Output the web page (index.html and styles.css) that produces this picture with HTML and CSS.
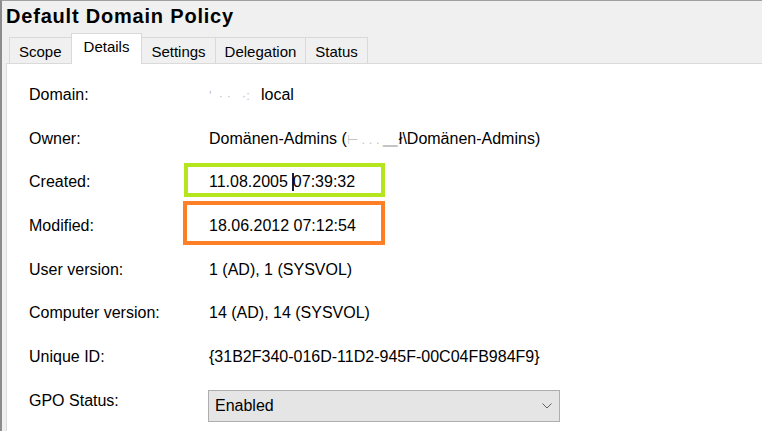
FILE: index.html
```html
<!DOCTYPE html>
<html lang="de">
<head>
  <meta charset="UTF-8" />
  <meta name="viewport" content="width=device-width, initial-scale=1.0" />
  <title>Default Domain Policy</title>
  <link rel="stylesheet" href="styles.css">
</head>
<body>
  <h1 class="title">Default Domain Policy</h1>

  <div class="tabs">
    <span class="tab">Scope</span>
    <span class="tab active">Details</span>
    <span class="tab">Settings</span>
    <span class="tab">Delegation</span>
    <span class="tab">Status</span>
  </div>

  <div class="panel">
    <div class="details">
      <div class="label">Domain:</div>
      <div class="value"><span class="redact">'&nbsp;&nbsp;·&nbsp;·&nbsp;&nbsp;&nbsp;·:</span>local</div>

      <div class="label">Owner:</div>
      <div class="value">Domänen-Admins (<span class="redact">⊢ . . . ‗‗.</span>ł\Domänen-Admins)</div>

      <div class="label">Created:</div>
      <div class="value">
        11.08.2005 <span class="caret"></span>07:39:32
        <span class="mark green"></span>
      </div>

      <div class="label">Modified:</div>
      <div class="value">
        18.06.2012 07:12:54
        <span class="mark orange"></span>
      </div>

      <div class="label">User version:</div>
      <div class="value">1 (AD), 1 (SYSVOL)</div>

      <div class="label">Computer version:</div>
      <div class="value">14 (AD), 14 (SYSVOL)</div>

      <div class="label">Unique ID:</div>
      <div class="value">{31B2F340-016D-11D2-945F-00C04FB984F9}</div>

      <div class="label">GPO Status:</div>
      <div class="value">
        <div class="select">
          <span>Enabled</span>
          <svg width="10" height="6" viewBox="0 0 10 6"><polyline points="0.5,0.5 5,5 9.5,0.5" fill="none" stroke="#606060" stroke-width="1"/></svg>
        </div>
      </div>
    </div>
  </div>
</body>
</html>
```

FILE: styles.css
```css
body {
  margin: 0;
  height: 430px;
  overflow: hidden;
  font-family: "Liberation Sans", Arial, sans-serif;
  background-color: #f0f0f0;
  border-top: 1px solid #a0a0a0;
  border-left: 2px solid #8c8c8c;
  display: flex;
  flex-direction: column;
}
.title {
  margin: 0;
  padding: 4px 0 0 4px;
  height: 29px;
  font-size: 20px;
  line-height: 22px;
  letter-spacing: 0.8px;
  font-weight: bold;
  color: #000;
}
.tabs {
  display: flex;
  align-items: flex-end;
  padding-left: 7px;
  height: 29px;
}
.tab {
  box-sizing: border-box;
  height: 26px;
  padding: 4px 9px 0;
  font-size: 15px;
  line-height: 20px;
  color: #000;
  background: #f0f0f0;
  border: 1px solid #d9d9d9;
  border-bottom: none;
  margin-right: -1px;
}
.tab.active {
  position: relative;
  height: 31px;
  padding: 3px 12px 0;
  margin-bottom: -1px;
  background: #fff;
  border-color: #d9d9d9;
}
.panel {
  flex: 1;
  margin-left: 4px;
  background: #fff;
  border-top: 1px solid #dadada;
  border-left: 1px solid #dcdcdc;
}
.details {
  display: grid;
  grid-template-columns: 180px 1fr;
  grid-auto-rows: 43.7px;
  padding: 9px 0 0 22px;
  font-size: 16px;
  line-height: 43.7px;
  color: #000;
}
.value {
  position: relative;
  white-space: nowrap;
}
.redact {
  display: inline-block;
  color: #c4c4c4;
  font-size: 13px;
}
.value > .redact:first-child {
  width: 52px;
}
.caret {
  display: inline-block;
  width: 1.5px;
  height: 18px;
  background: #1a1a3a;
  vertical-align: -4px;
  margin-right: -1px;
}
.mark {
  position: absolute;
  box-sizing: border-box;
  border: 4px solid;
  pointer-events: none;
}
.mark.green {
  left: -25px;
  top: 3px;
  width: 201px;
  height: 34px;
  border-color: #b5e61d;
}
.mark.orange {
  left: -26px;
  top: -3px;
  width: 202px;
  height: 44px;
  border-color: #ff7f27;
}
.select {
  box-sizing: border-box;
  display: flex;
  align-items: center;
  justify-content: space-between;
  width: 352px;
  height: 32px;
  margin: 11px 0 0 -1px;
  padding: 0 7px 0 6px;
  background: #e5e5e5;
  border: 1px solid #adadad;
  line-height: 30px;
}
.select svg {
  margin-top: 1px;
}
```
